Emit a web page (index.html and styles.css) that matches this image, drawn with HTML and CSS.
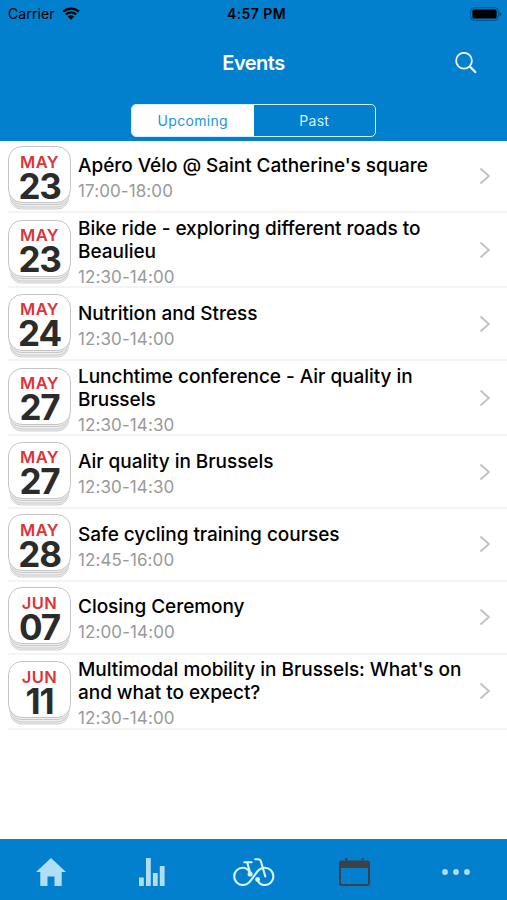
FILE: index.html
```html
<!DOCTYPE html>
<html lang="en">
<head>
  <meta charset="UTF-8" />
  <meta name="viewport" content="width=device-width, initial-scale=1" />
  <title>Events</title>
  <link rel="stylesheet" href="styles.css">
</head>
<body>
  <svg class="defs" aria-hidden="true">
    <symbol id="chevron" viewBox="0 0 12 18">
      <path d="M1.5 1.5 9.8 9l-8.3 7.5" fill="none" stroke="currentColor" stroke-width="2" />
    </symbol>
  </svg>

  <header class="header">
    <!-- Status bar -->
    <div class="status-bar">
      <div class="carrier">
        <span>Carrier</span>
        <svg class="wifi" width="18" height="13" viewBox="0 0 18 13">
          <path d="M1.2 4.7a11.2 11.2 0 0 1 15.6 0M3.9 7.5a7.3 7.3 0 0 1 10.2 0" fill="none" stroke="currentColor" stroke-width="2.3" />
          <path d="M9 12.7 5.7 9.5a4.7 4.7 0 0 1 6.6 0z" fill="currentColor" />
        </svg>
      </div>
      <div class="clock">4:57 PM</div>
      <svg class="battery" width="32" height="14" viewBox="0 0 32 14">
        <rect x=".7" y=".7" width="27.6" height="12.6" rx="3.2" fill="none" stroke="#04508a" stroke-width="1" />
        <rect x="2.4" y="2.4" width="24.2" height="9.2" rx="1.6" fill="#000" />
        <path d="M29.6 4.7c2 .8 2 3.8 0 4.6z" fill="#04508a" />
      </svg>
    </div>

    <div class="nav-bar">
      <h1>Events</h1>
      <button class="search" aria-label="Search">
        <svg width="22" height="22" viewBox="0 0 22 22" fill="none" stroke="#e8f8ff" stroke-width="1.8">
          <circle cx="9" cy="8.7" r="7.9" />
          <path d="m14.7 14.4 6.3 6.3" stroke-width="2.2" />
        </svg>
      </button>
    </div>

    <div class="segments">
      <button class="segment active">Upcoming</button>
      <button class="segment">Past</button>
    </div>
  </header>

  <!-- Event list -->
  <main class="events">
    <article class="event">
      <div class="date"><span class="month">MAY</span><span class="day">23</span></div>
      <div class="info">
        <h2>Apéro Vélo @ Saint Catherine's square</h2>
        <p>17:00-18:00</p>
      </div>
      <svg class="chevron"><use href="#chevron" /></svg>
    </article>
    <article class="event tall">
      <div class="date"><span class="month">MAY</span><span class="day">23</span></div>
      <div class="info">
        <h2>Bike ride - exploring different roads to<br>Beaulieu</h2>
        <p>12:30-14:00</p>
      </div>
      <svg class="chevron"><use href="#chevron" /></svg>
    </article>
    <article class="event">
      <div class="date"><span class="month">MAY</span><span class="day">24</span></div>
      <div class="info">
        <h2>Nutrition and Stress</h2>
        <p>12:30-14:00</p>
      </div>
      <svg class="chevron"><use href="#chevron" /></svg>
    </article>
    <article class="event tall">
      <div class="date"><span class="month">MAY</span><span class="day">27</span></div>
      <div class="info">
        <h2>Lunchtime conference - Air quality in<br>Brussels</h2>
        <p>12:30-14:30</p>
      </div>
      <svg class="chevron"><use href="#chevron" /></svg>
    </article>
    <article class="event">
      <div class="date"><span class="month">MAY</span><span class="day">27</span></div>
      <div class="info">
        <h2>Air quality in Brussels</h2>
        <p>12:30-14:30</p>
      </div>
      <svg class="chevron"><use href="#chevron" /></svg>
    </article>
    <article class="event">
      <div class="date"><span class="month">MAY</span><span class="day">28</span></div>
      <div class="info">
        <h2>Safe cycling training courses</h2>
        <p>12:45-16:00</p>
      </div>
      <svg class="chevron"><use href="#chevron" /></svg>
    </article>
    <article class="event">
      <div class="date"><span class="month">JUN</span><span class="day">07</span></div>
      <div class="info">
        <h2>Closing Ceremony</h2>
        <p>12:00-14:00</p>
      </div>
      <svg class="chevron"><use href="#chevron" /></svg>
    </article>
    <article class="event tall">
      <div class="date"><span class="month">JUN</span><span class="day">11</span></div>
      <div class="info">
        <h2>Multimodal mobility in Brussels: What's on<br>and what to expect?</h2>
        <p>12:30-14:00</p>
      </div>
      <svg class="chevron"><use href="#chevron" /></svg>
    </article>
  </main>

  <!-- Bottom tabs -->
  <nav class="tab-bar">
    <a class="tab" aria-label="Home">
      <svg width="30" height="28" viewBox="0 0 30 28" fill="currentColor">
        <path d="M15 0 30 14h-4.3v14h-7.2v-9.5h-7V28H4.3V14H0z" />
      </svg>
    </a>
    <a class="tab" aria-label="Statistics">
      <svg width="26" height="28" viewBox="0 0 26 28" fill="currentColor">
        <path d="M0 19.5h4.8V28H0zM7 0h4.8v28H7zM13.9 15h4.8v13h-4.8zM20.8 8h4.8v20h-4.8z" />
      </svg>
    </a>
    <a class="tab bike" aria-label="Ride">
      <svg width="42" height="28" viewBox="0 0 42 28" fill="none" stroke="currentColor" stroke-width="2.1" stroke-linecap="round" stroke-linejoin="round">
        <path d="M16.8 14.2C14.8 11 12.5 9.8 9.8 9.8a8.6 8.6 0 1 0 0 17.2c5.2 0 7.800-3.8 11-8.6 3.4-5.2 5.8-8.6 11-8.6a8.6 8.6 0 1 1 0 17.2c-3.2 0-5.5-1.5-7.2-4.4" />
        <path d="M11.3 4.3h7.4M14.3 4.8l2.8 10.2M22.2 1.2h3.3c1.3 0 2 .7 2.3 1.8l4.5 15.4" />
        <circle cx="17.1" cy="16" r="1.5" fill="currentColor" />
        <circle cx="24.6" cy="21.4" r="1.4" fill="currentColor" />
      </svg>
    </a>
    <a class="tab active" aria-label="Events">
      <svg width="31" height="28" viewBox="0 0 31 28">
        <rect x="1" y="4" width="29" height="23" rx="2" fill="none" stroke="currentColor" stroke-width="2" />
        <path d="M0 10V5q0-2.400 2.400-2.400h2.400q0 2.700 2.400 2.700t2.400-2.700h11.800q0 2.700 2.400 2.700t2.400-2.700h2.400Q31 2.600 31 5v5z" fill="currentColor" />
        <path d="M7.200 1.400v1.800M23.800 1.400v1.800" stroke="currentColor" stroke-width="2.6" stroke-linecap="round" />
      </svg>
    </a>
    <a class="tab more" aria-label="More">
      <svg width="28" height="6" viewBox="0 0 28 6" fill="currentColor">
        <circle cx="3" cy="3" r="2.9" />
        <circle cx="14" cy="3" r="2.9" />
        <circle cx="25" cy="3" r="2.9" />
      </svg>
    </a>
  </nav>
</body>
</html>
```

FILE: styles.css
```css
* {
  box-sizing: border-box;
}

body {
  margin: 0;
  height: 900px;
  display: flex;
  flex-direction: column;
  overflow: hidden;
  background: #fff;
  color: #000;
  font-family: Inter, "Liberation Sans", sans-serif;
}

h1, h2, p {
  margin: 0;
}

button {
  padding: 0;
  border: none;
  background: none;
  font-family: inherit;
}

svg {
  display: block;
}

.defs {
  position: absolute;
  width: 0;
  height: 0;
}

/* Header */
.header {
  flex: none;
  height: 140.6px;
  background: #027fcd;
}

.status-bar {
  display: grid;
  grid-template-columns: 1fr auto 1fr;
  align-items: center;
  height: 27px;
  padding: 0 5px 0 8px;
  font-size: 14px;
}

.carrier {
  display: flex;
  align-items: center;
  gap: 7px;
  letter-spacing: 0.1px;
}

.clock {
  padding-left: 3px;
  font-size: 14px;
  font-weight: 600;
  letter-spacing: 0.4px;
}

.battery {
  justify-self: end;
}

.nav-bar {
  display: grid;
  grid-template-columns: 1fr auto 1fr;
  align-items: center;
  height: 71px;
  padding: 0 30px;
}

.nav-bar h1 {
  grid-column: 2;
  color: #fff;
  font-size: 20px;
  font-weight: 600;
  letter-spacing: -0.5px;
}

.search {
  justify-self: end;
}

.segments {
  display: flex;
  width: 245px;
  height: 33px;
  margin: 6px auto 0;
  border: 1.5px solid #d5f1ff;
  border-radius: 5px;
  overflow: hidden;
}

.segment {
  flex: 1;
  color: #d5f1ff;
  font-size: 14px;
  letter-spacing: 0.3px;
}

.segment.active {
  background: #fff;
  color: #2793d5;
}

/* Event rows */
.events {
  flex: 1;
}

.event {
  display: flex;
  height: 72.8px;
  margin-left: 8px;
  padding-right: 16px;
  border-bottom: 2px solid #f4f4f4;
}

.event.tall {
  height: 75px;
}

.date {
  display: flex;
  flex-direction: column;
  align-items: center;
  width: 63px;
  height: 57px;
  margin-top: 5.5px;
  border: 1px solid #c4c4c4;
  border-radius: 14px;
  background: #fff;
  box-shadow: 0 2px 0 -1px #efefef, 0 3px 0 -1px #c8c8c8,
    0 5px 0 -1.5px #efefef, 0 6px 0 -1.5px #c8c8c8,
    0 7.5px 0 -2px #efefef, 0 8.5px 0 -2px #cfcfcf;
}

.tall .date {
  margin-top: 6.6px;
}

.month {
  margin-top: 5.5px;
  color: #dc3439;
  font-size: 16.5px;
  font-weight: 600;
  line-height: 19px;
  letter-spacing: 0.4px;
}

.day {
  color: #2b2b2b;
  font-size: 35px;
  font-weight: 700;
  line-height: 29px;
  letter-spacing: -1.2px;
}

.info {
  flex: 1;
  padding: 13.7px 0 0 7px;
  white-space: nowrap;
}

.tall .info {
  padding-top: 3.8px;
}

.info h2 {
  font-size: 19px;
  font-weight: 500;
  line-height: 23px;
  letter-spacing: -0.04px;
}

.info p {
  margin-top: 3px;
  color: #999;
  font-size: 17px;
  line-height: 22px;
  letter-spacing: 0.1px;
}

.chevron {
  align-self: center;
  width: 12px;
  height: 18px;
  color: #c3c3c6;
}

/* Tab bar */
.tab-bar {
  display: flex;
  flex: none;
  height: 61.5px;
  background: #027fcd;
}

.tab {
  flex: 1;
  display: flex;
  justify-content: center;
  padding-top: 19.5px;
  color: #b0def6;
}

.tab.bike {
  color: #d8f3ff;
}

.tab.active {
  color: #3f4144;
}

.tab.more {
  padding-top: 30.5px;
}
```
